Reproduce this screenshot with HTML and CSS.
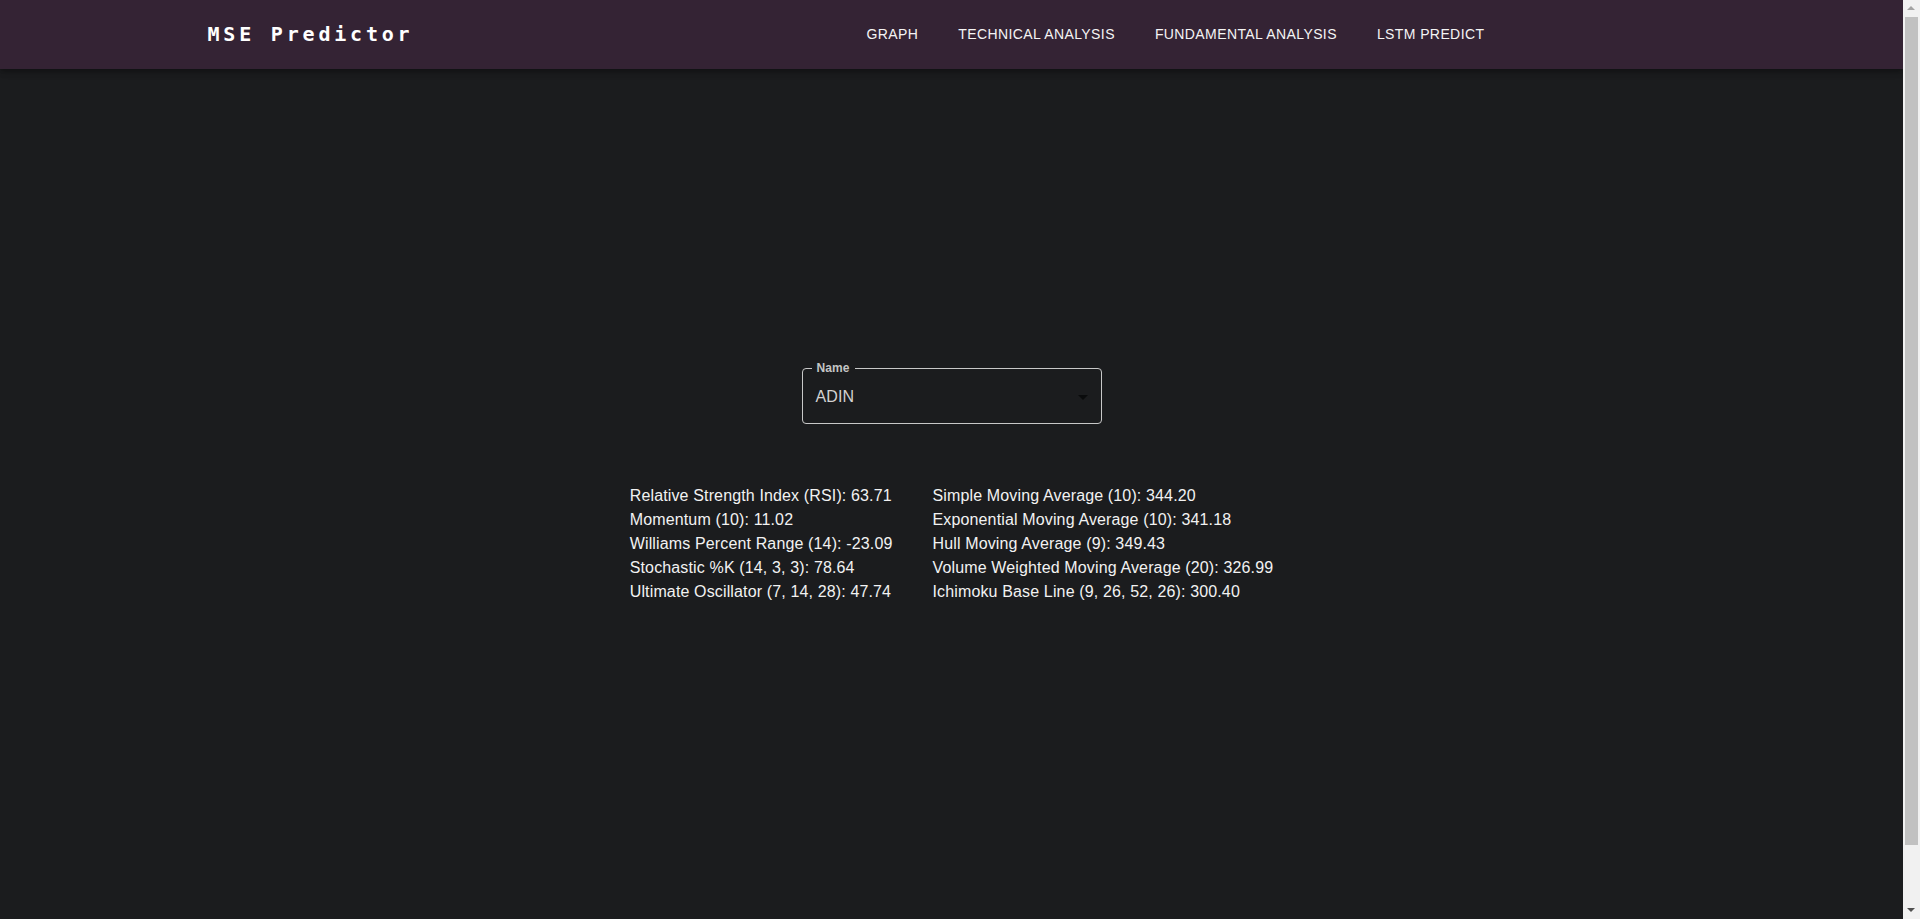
FILE: index.html
```html
<!DOCTYPE html>
<html lang="en">
<head>
<meta charset="utf-8">
<title>MSE Predictor</title>
<link rel="stylesheet" href="styles.css">
</head>
<body>
<header class="appbar">
  <div class="toolbar">
    <div class="logo">MSE Predictor</div>
    <nav class="nav">
      <a class="nav-btn">Graph</a>
      <a class="nav-btn">Technical Analysis</a>
      <a class="nav-btn">Fundamental Analysis</a>
      <a class="nav-btn">LSTM Predict</a>
    </nav>
  </div>
</header>
<main class="main">
  <div class="field">
    <span class="field-label">Name</span>
    <div class="field-value">ADIN</div>
    <span class="field-arrow"></span>
  </div>
  <div class="metrics">
    <div class="col">
      <div class="row">Relative Strength Index (RSI): 63.71</div>
      <div class="row">Momentum (10): 11.02</div>
      <div class="row">Williams Percent Range (14): -23.09</div>
      <div class="row">Stochastic %K (14, 3, 3): 78.64</div>
      <div class="row">Ultimate Oscillator (7, 14, 28): 47.74</div>
    </div>
    <div class="col">
      <div class="row">Simple Moving Average (10): 344.20</div>
      <div class="row">Exponential Moving Average (10): 341.18</div>
      <div class="row">Hull Moving Average (9): 349.43</div>
      <div class="row">Volume Weighted Moving Average (20): 326.99</div>
      <div class="row">Ichimoku Base Line (9, 26, 52, 26): 300.40</div>
    </div>
  </div>
</main>
<div class="scrollbar" aria-hidden="true">
  <span class="sb-up"></span>
  <span class="sb-thumb"></span>
  <span class="sb-down"></span>
</div>
</body>
</html>
```

FILE: styles.css
```css
html, body {
  margin: 0;
  padding: 0;
}
html {
  background: #1b1c1e;
}
body {
  background: #1b1c1e;
  color: #ffffff;
  font-family: "Liberation Sans", Arial, sans-serif;
  margin-right: 17px;
}
.appbar {
  background: #342334;
  height: 69px;
  box-shadow: 0 2px 4px -1px rgba(0,0,0,0.2), 0 4px 5px 0 rgba(0,0,0,0.14), 0 1px 10px 0 rgba(0,0,0,0.12);
  position: relative;
}
.toolbar {
  max-width: 1536px;
  margin: 0 auto;
  padding: 0 24px;
  height: 69px;
  display: flex;
  align-items: center;
  box-sizing: border-box;
}
.logo {
  font-family: "DejaVu Sans Mono", "Liberation Mono", monospace;
  font-weight: 700;
  font-size: 20px;
  letter-spacing: 3.8px;
  color: #ffffff;
  width: 651px;
  flex: none;
  white-space: nowrap;
  padding-bottom: 1px;
}
.nav {
  display: flex;
  gap: 24px;
}
.nav-btn {
  font-family: "Liberation Sans", Arial, sans-serif;
  font-weight: 400;
  font-size: 14px;
  letter-spacing: 0.4px;
  text-transform: uppercase;
  line-height: 24.5px;
  padding: 6px 8px;
  color: #f4f4f4;
  cursor: pointer;
}
.main {
  height: 913px;
  box-sizing: border-box;
  padding-top: 299px;
  display: flex;
  flex-direction: column;
  align-items: center;
}
.field {
  position: relative;
  width: 300px;
  height: 56px;
  box-sizing: border-box;
  border: 1px solid #c8c8c8;
  border-radius: 4px;
  display: flex;
  align-items: center;
  padding: 0 13px;
}
.field-label {
  position: absolute;
  top: -7px;
  left: 9px;
  padding: 0 5px;
  background: #1b1c1e;
  font-size: 12px;
  line-height: 12px;
  color: #c4c4c4;
  font-weight: 700;
  letter-spacing: 0.1px;
}
.field-value {
  font-size: 16px;
  color: #d2d2d2;
  line-height: 23px;
  padding-top: 1px;
  letter-spacing: 0.1px;
}
.field-arrow {
  position: absolute;
  right: 13px;
  top: 26px;
  width: 0;
  height: 0;
  border-left: 5px solid transparent;
  border-right: 5px solid transparent;
  border-top: 5px solid rgba(0,0,0,0.6);
}
.metrics {
  margin-top: 60px;
  display: flex;
  gap: 40px;
}
.col {
  display: flex;
  flex-direction: column;
}
.row {
  font-size: 16px;
  line-height: 24px;
  letter-spacing: 0.14px;
  color: #f2f2f2;
  white-space: nowrap;
}
.scrollbar {
  position: fixed;
  top: 0;
  right: 0;
  width: 17px;
  height: 100vh;
  background: #f1f1f1;
}
.sb-up {
  position: absolute;
  top: 6px;
  left: 4px;
  width: 0;
  height: 0;
  border-left: 4px solid transparent;
  border-right: 4px solid transparent;
  border-bottom: 4px solid #a3a3a3;
}
.sb-thumb {
  position: absolute;
  top: 17px;
  left: 2px;
  width: 13px;
  height: 828px;
  background: #c1c1c1;
}
.sb-down {
  position: absolute;
  bottom: 7px;
  left: 4px;
  width: 0;
  height: 0;
  border-left: 4px solid transparent;
  border-right: 4px solid transparent;
  border-top: 4px solid #505050;
}
```
